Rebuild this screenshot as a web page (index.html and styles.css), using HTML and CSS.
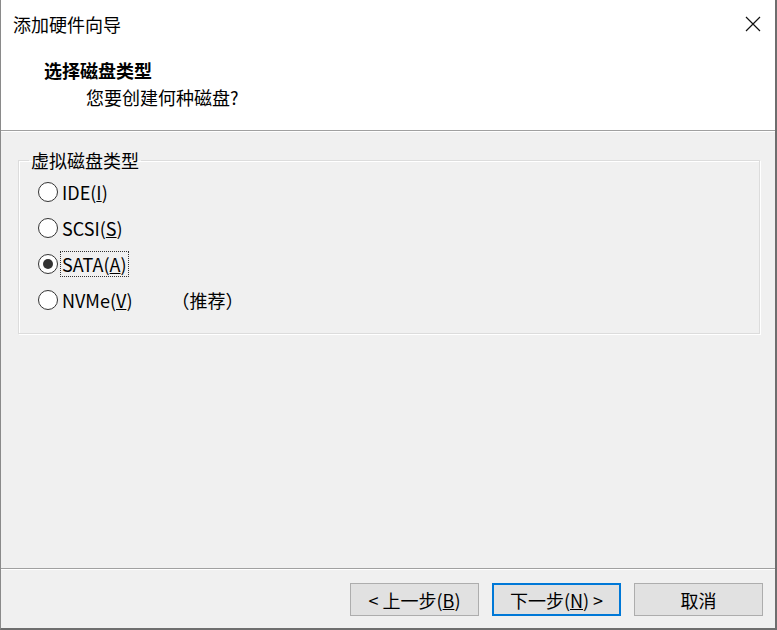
FILE: index.html
```html
<!DOCTYPE html>
<html>
<head>
    <meta charset="UTF-8">
    <title>添加硬件向导</title>
<link rel="stylesheet" href="styles.css">
</head>
<body>
    <div class="wizard">
        <div class="top">
            <div class="titlebar">
                <span class="title">添加硬件向导</span>
                <svg class="close" width="16" height="16" viewBox="0 0 16 16">
                    <path d="M1 1 L15 15 M15 1 L1 15" stroke="#111" stroke-width="1.2" fill="none"/>
                </svg>
            </div>
            <div class="heading">选择磁盘类型</div>
            <div class="subheading">您要创建何种磁盘?</div>
        </div>

        <div class="main">
            <fieldset class="group">
                <legend>虚拟磁盘类型</legend>
                <div class="row">
                    <span class="radio"></span>
                    <span class="label">IDE(<u>I</u>)</span>
                </div>
                <div class="row">
                    <span class="radio"></span>
                    <span class="label">SCSI(<u>S</u>)</span>
                </div>
                <div class="row">
                    <span class="radio checked"></span>
                    <span class="label focus">SATA(<u>A</u>)</span>
                </div>
                <div class="row">
                    <span class="radio"></span>
                    <span class="label">NVMe(<u>V</u>)</span>
                    <span class="note">（推荐）</span>
                </div>
            </fieldset>
        </div>

        <div class="buttons">
            <button class="btn">&lt; 上一步(<u>B</u>)</button>
            <button class="btn default">下一步(<u>N</u>) &gt;</button>
            <button class="btn">取消</button>
        </div>
    </div>
</body>
</html>
```

FILE: styles.css
```css
body {
  margin: 0;
  font-family: "Noto Sans CJK SC", "Noto Sans", sans-serif;
  font-size: 18px;
  color: #000;
}

.wizard {
  width: 777px;
  height: 630px;
  box-sizing: border-box;
  border-left: 1px solid #8a8a8a;
  border-right: 2px solid #6e6e6e;
  border-bottom: 2px solid #6e6e6e;
  background-color: #f0f0f0;
  display: flex;
  flex-direction: column;
}

.top {
  height: 130px;
  background-color: #fff;
  border-bottom: 1px solid #a0a0a0;
  box-shadow: 0 1px 0 #fff;
}

.titlebar {
  height: 48px;
  display: flex;
  align-items: center;
  justify-content: space-between;
  padding: 0 14px 0 12px;
}

.title {
  line-height: 24px;
}

.heading {
  font-weight: bold;
  line-height: 24px;
  margin: 10px 0 0 43px;
}

.subheading {
  line-height: 24px;
  margin: 3px 0 0 85px;
}

.main {
  flex: 1;
  padding: 17px 15px 0 17px;
}

.group {
  margin: 0;
  padding: 2px 0 15px 10px;
  border: 1px solid #dcdcdc;
  box-shadow: inset 1px 1px 0 #fff, 1px 1px 0 #fff;
}

legend {
  padding: 0 2px;
  line-height: 24px;
}

.row {
  height: 36px;
  display: flex;
  align-items: center;
  margin-left: 9px;
}

.radio {
  width: 20px;
  height: 20px;
  box-sizing: border-box;
  border: 1.5px solid #333;
  border-radius: 50%;
  background-color: #fff;
  display: flex;
  align-items: center;
  justify-content: center;
}

.radio.checked::after {
  content: "";
  width: 10px;
  height: 10px;
  border-radius: 50%;
  background-color: #333;
}

.label {
  margin-left: 2px;
  padding: 0 1px;
  line-height: 24px;
  border: 1px dotted transparent;
}

.label.focus {
  border-color: #333;
}

.note {
  margin-left: 37px;
}

.buttons {
  height: 60px;
  box-sizing: border-box;
  border-top: 1px solid #a0a0a0;
  box-shadow: inset 0 1px 0 #fff;
  display: flex;
  justify-content: flex-end;
  gap: 13px;
  padding: 14px 12px 0 0;
}

.btn {
  width: 129px;
  height: 33px;
  box-sizing: border-box;
  background-color: #e1e1e1;
  border: 1px solid #adadad;
  font-family: "Noto Sans CJK SC", "Noto Sans", sans-serif;
  font-size: 18px;
  line-height: 24px;
  color: #000;
  padding: 0;
}

.btn.default {
  border: 2px solid #0078d7;
}
```
